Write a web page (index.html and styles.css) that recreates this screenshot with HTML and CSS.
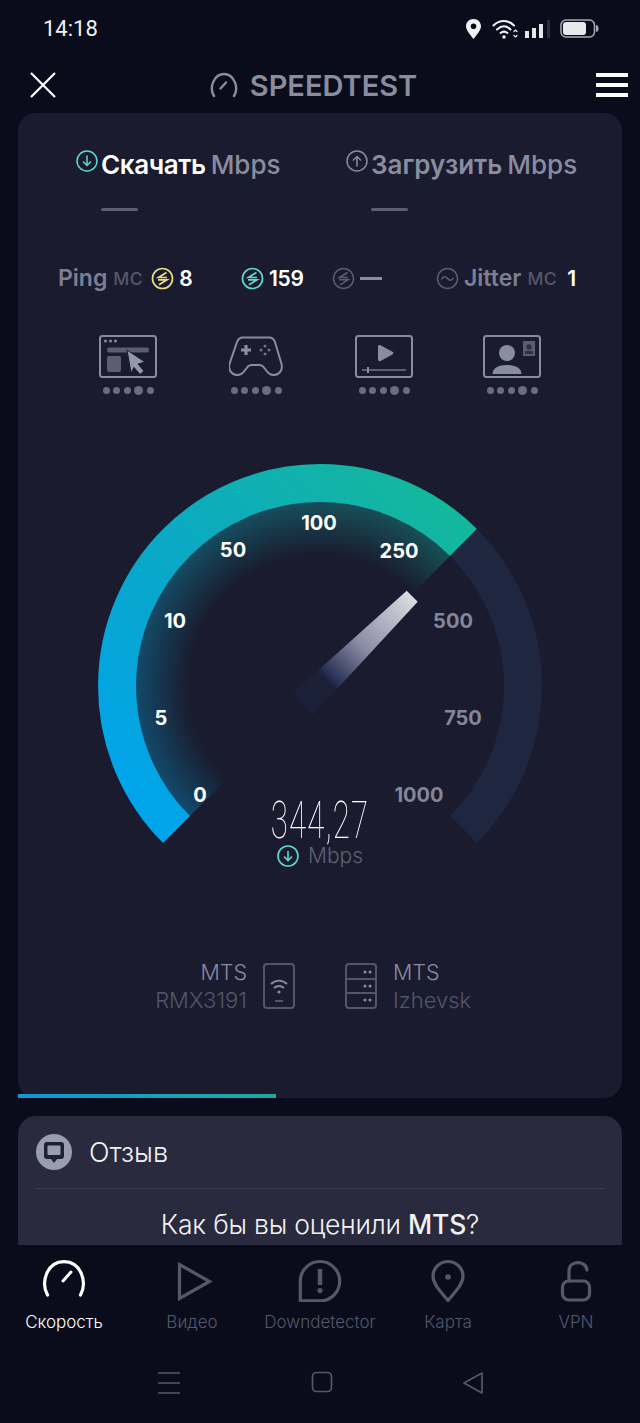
FILE: index.html
```html
<!DOCTYPE html>
<html lang="ru">
<head>
  <meta charset="UTF-8" />
  <meta name="viewport" content="width=device-width, initial-scale=1.0" />
  <title>Speedtest</title>
  <link rel="stylesheet" href="styles.css">
</head>
<body>
  <div class="screen">
    <!-- Status bar -->
    <div class="status-bar">
      <span class="clock">14:18</span>
      <div class="status-icons">
        <svg class="pin" width="17" height="20" viewBox="0 0 16 20"><path fill="#f2f2f4" fill-rule="evenodd" d="M8 0C3.600 0 .5 3.200 .5 7.200.5 11.500 5.500 16.500 8 20c2.500-3.500 7.500-8.500 7.500-12.800C15.500 3.200 12.400 0 8 0zm0 4.500a2.800 2.800 0 1 1 0 5.600 2.800 2.800 0 0 1 0-5.600z"/></svg>
        <svg class="wifi" width="26" height="20" viewBox="0 0 26 20" fill="none" stroke="#f2f2f4" stroke-width="2" stroke-linecap="round"><path d="M1.500 6.500c6-6 14.500-6 20.500 0"/><path d="M5 10.500c4.500-4 9.500-4 13.500 0"/><path d="M8.500 14c2.500-2 4.500-2 7 0"/><circle cx="12" cy="18" r="1.700" fill="#f2f2f4" stroke="none"/><path d="M22 12.500l1.500-1.500 1.500 1.500M22 16.500l1.500 1.500 1.500-1.500" stroke-width="1.200"/></svg>
        <svg class="bars" width="26" height="18" viewBox="0 0 26 18"><rect x="0" y="11" width="4" height="7" fill="#e6e6ea"/><rect x="7" y="8" width="4" height="10" fill="#e6e6ea"/><rect x="14" y="4" width="4" height="14" fill="#e6e6ea"/><rect x="22" y="0" width="3" height="18" fill="#2c2e3c"/></svg>
        <svg class="battery" width="39" height="19" viewBox="0 0 39 19"><rect x="1" y="1" width="33.500" height="17" rx="5" fill="none" stroke="#a9aab2" stroke-width="1.500"/><rect x="3" y="3" width="23" height="13" rx="3" fill="#e9e9ec"/><path d="M36 6c2 .3 2.500 1.500 2.500 3.500S38 12.700 36 13z" fill="#a9aab2"/></svg>
      </div>
    </div>

    <!-- Top bar -->
    <div class="top-bar">
      <svg width="26" height="26" viewBox="0 0 26 26" stroke="#fff" stroke-width="2.200"><path d="M1 1l24 24M25 1L1 25"/></svg>
      <div class="brand">
        <svg width="30" height="26" viewBox="0 0 30 26" fill="none" stroke="#8a8c9f" stroke-width="2.400" stroke-linecap="round"><path d="M5 24C-.5 15 5.500 2 15 2s15.500 13 10 22"/><path d="M11.500 16.500l5.500-6"/></svg>
        <span>SPEEDTEST</span>
      </div>
      <div class="burger"><i></i><i></i><i></i></div>
    </div>

    <!-- Main test card -->
    <div class="test-card">
      <div class="tabs">
        <div class="tab">
          <div class="tab-title">
            <svg class="tab-icon" width="22" height="22" viewBox="0 0 22 22" fill="none" stroke="#5fd8d0" stroke-width="1.500"><circle cx="11" cy="11" r="10"/><path d="M11 5.500v10M7 11.500l4 4 4-4"/></svg>
            <span class="tab-name active">Скачать</span><span class="tab-unit">Mbps</span>
          </div>
          <div class="tab-dash"></div>
        </div>
        <div class="tab">
          <div class="tab-title">
            <svg class="tab-icon" width="22" height="22" viewBox="0 0 22 22" fill="none" stroke="#8a8c9f" stroke-width="1.500"><circle cx="11" cy="11" r="10"/><path d="M11 16.500v-10M7 10.500l4-4 4 4"/></svg>
            <span class="tab-name">Загрузить</span><span class="tab-unit">Mbps</span>
          </div>
          <div class="tab-dash"></div>
        </div>
      </div>

      <div class="stats">
        <div class="stat">
          <span class="stat-label">Ping</span><span class="stat-unit">МС</span>
          <svg class="stat-icon" width="23" height="23" viewBox="0 0 23 23" fill="none" stroke="#eadc82" stroke-width="1.700"><circle cx="11.500" cy="11.500" r="10"/><path d="M15.500 5.500L7.500 10.500H16M7 12.800h9l-8 5"/></svg>
          <span class="stat-value">8</span>
        </div>
        <div class="stat">
          <svg class="stat-icon first" width="23" height="23" viewBox="0 0 23 23" fill="none" stroke="#5fd8d0" stroke-width="1.700"><circle cx="11.500" cy="11.500" r="10"/><path d="M15.500 5.500L7.500 10.500H16M7 12.800h9l-8 5"/></svg>
          <span class="stat-value">159</span>
        </div>
        <div class="stat">
          <svg class="stat-icon first" width="23" height="23" viewBox="0 0 23 23" fill="none" stroke="#5c5e70" stroke-width="1.500"><circle cx="11.500" cy="11.500" r="10"/><path d="M15.500 5.500L7.500 10.500H16M7 12.800h9l-8 5"/></svg>
          <span class="stat-none"></span>
        </div>
        <div class="stat">
          <svg class="stat-icon first" width="23" height="23" viewBox="0 0 23 23" fill="none" stroke="#5c5e70" stroke-width="1.500"><circle cx="11.500" cy="11.500" r="10"/><path d="M5.500 12.500c1.500-3.500 4-3.500 6 -1s4.500 2.500 6-1"/></svg>
          <span class="stat-label">Jitter</span><span class="stat-unit">МС</span><span class="stat-value jitter">1</span>
        </div>
      </div>

      <div class="services">
        <div class="service">
          <svg width="58" height="43" viewBox="0 0 58 43"><rect x="1" y="1" width="56" height="41" rx="2.500" fill="none" stroke="#8a8c9f" stroke-width="2"/><circle cx="6.500" cy="6" r="1.500" fill="#8a8c9f"/><circle cx="11.500" cy="6" r="1.500" fill="#8a8c9f"/><circle cx="16.500" cy="6" r="1.500" fill="#8a8c9f"/><rect x="8" y="12.500" width="42" height="5" rx="2.500" fill="#5c5e70"/><rect x="8" y="21" width="14" height="16" rx="2" fill="#5c5e70"/><path d="M28 15L46 27l-7 2 6 7-4 3.500-6-7-3 5.500z" fill="#9496a9" stroke="#1a1b2e" stroke-width="1"/></svg>
          <div class="dots"><i></i><i></i><i></i><b></b><i></i></div>
        </div>
        <div class="service">
          <svg width="54" height="38" viewBox="0 0 54 40" fill="none"><path d="M14 1h26c3 0 5 1.500 6 4.500l6.500 22c1.500 6-2 10.500-7.500 11-3 .3-5-1-7-3.500l-4-5c-1-1-2-1.500-3.500-1.500h-8c-1.500 0-2.500.5-3.500 1.500l-4 5c-2 2.500-4 3.800-7 3.500-5.500-.5-9-5-7.500-11L8 5.500C9 2.500 11 1 14 1z" stroke="#8a8c9f" stroke-width="2"/><path d="M12 13.500h10M17 8.500v10" stroke="#8a8c9f" stroke-width="3.200"/><g fill="#70728a"><circle cx="36" cy="9.500" r="1.500"/><circle cx="36" cy="17.500" r="1.500"/><circle cx="32" cy="13.500" r="1.500"/><circle cx="40" cy="13.500" r="1.500"/></g></svg>
          <div class="dots"><i></i><i></i><i></i><b></b><i></i></div>
        </div>
        <div class="service">
          <svg width="58" height="43" viewBox="0 0 58 43"><rect x="1" y="1" width="56" height="41" rx="2.500" fill="none" stroke="#8a8c9f" stroke-width="2"/><path d="M23 11.500c0-1.500 1.300-2 2.500-1.300l12 6.500c1.200.7 1.200 2 0 2.700l-12 6.500c-1.200.7-2.500.2-2.500-1.300z" fill="#8a8c9f"/><rect x="7" y="34" width="44" height="2" fill="#5c5e70"/><rect x="12" y="32" width="2" height="6" fill="#8a8c9f"/></svg>
          <div class="dots"><i></i><i></i><i></i><b></b><i></i></div>
        </div>
        <div class="service">
          <svg width="58" height="43" viewBox="0 0 58 43"><rect x="1" y="1" width="56" height="41" rx="2.500" fill="none" stroke="#8a8c9f" stroke-width="2"/><circle cx="24" cy="18" r="8" fill="#8a8c9f"/><path d="M9.500 39c0-6 6-9 14.500-9s14.500 3 14.500 9z" fill="#8a8c9f"/><rect x="40" y="6" width="12" height="15" fill="#5c5e70"/><circle cx="46" cy="12" r="2.700" fill="#2c2e42"/><rect x="42" y="16" width="8" height="3" fill="#2c2e42"/></svg>
          <div class="dots"><i></i><i></i><i></i><b></b><i></i></div>
        </div>
      </div>

      <div class="gauge">
        <svg class="gauge-svg" width="604" height="420" viewBox="0 0 604 420">
          <defs>
            <linearGradient id="ringGrad" gradientUnits="userSpaceOnUse" x1="145" y1="393" x2="461" y2="81">
              <stop offset="0" stop-color="#00a4ec"/>
              <stop offset="0.35" stop-color="#07a6cf"/>
              <stop offset="0.7" stop-color="#0fafb4"/>
              <stop offset="1" stop-color="#14b89b"/>
            </linearGradient>
            <radialGradient id="glowFade" gradientUnits="userSpaceOnUse" cx="302" cy="236" r="186">
              <stop offset="0.7" stop-color="#000"/>
              <stop offset="1" stop-color="#5c5c5c"/>
            </radialGradient>
            <mask id="glowMask" maskUnits="userSpaceOnUse" x="0" y="0" width="604" height="420"><rect width="604" height="420" fill="url(#glowFade)"/></mask>
            <linearGradient id="needleGrad" gradientUnits="userSpaceOnUse" x1="394" y1="146" x2="285" y2="254">
              <stop offset="0" stop-color="#dcdce0"/>
              <stop offset="0.45" stop-color="#8d8ea6"/>
              <stop offset="0.75" stop-color="#262d52"/>
              <stop offset="0.78" stop-color="#1c213a"/>
              <stop offset="1" stop-color="#1b2038"/>
            </linearGradient>
          </defs>
          <path d="M170 368A180 180 0 0 1 434 104L302 236z" fill="url(#ringGrad)" mask="url(#glowMask)"/>
          <path d="M158.460 379.540A200 200 0 0 1 445.540 92.460" fill="none" stroke="url(#ringGrad)" stroke-width="38"/>
          <path d="M445.540 92.460A203 203 0 0 1 445.540 379.540" fill="none" stroke="#1e2640" stroke-width="38"/>
          <path d="M388.700 140.700L399.700 151.700 295 265 275 243z" fill="url(#needleGrad)"/>
          <g class="ticks">
            <text x="182" y="352">0</text>
            <text x="143" y="275">5</text>
            <text x="157" y="178">10</text>
            <text x="215" y="107">50</text>
            <text x="301" y="80">100</text>
            <text x="381" y="108">250</text>
            <text class="off" x="435" y="178">500</text>
            <text class="off" x="445" y="275">750</text>
            <text class="off" x="401" y="352">1000</text>
          </g>
        </svg>
        <div class="readout">
          <div class="readout-value">344,27</div>
          <div class="readout-unit">
            <svg width="22" height="22" viewBox="0 0 22 22" fill="none" stroke="#5fd8d0" stroke-width="1.600"><circle cx="11" cy="11" r="10"/><path d="M11 6v9.500M7 11.500l4 4 4-4"/></svg>
            <span>Mbps</span>
          </div>
        </div>
      </div>

      <div class="hosts">
        <div class="host host-left">
          <div class="host-text"><div class="host-name">MTS</div><div class="host-sub">RMX3191</div></div>
          <svg width="32" height="46" viewBox="0 0 32 46" fill="none" stroke="#53566a" stroke-width="2"><rect x="1" y="1" width="30" height="44" rx="3"/><path d="M8 21c5-4.500 11-4.500 16 0M11 25c3-2.500 7-2.500 10 0" stroke="#8a8c9f"/><circle cx="16" cy="29" r="1.600" fill="#8a8c9f" stroke="none"/><path d="M12 38h8"/></svg>
        </div>
        <div class="host">
          <svg width="32" height="46" viewBox="0 0 32 46" fill="none" stroke="#53566a" stroke-width="2"><rect x="1" y="1" width="30" height="44" rx="3"/><path d="M1 16h30M1 30h30"/><g fill="#8a8c9f" stroke="none"><circle cx="20" cy="9" r="1.500"/><circle cx="25" cy="9" r="1.500"/><circle cx="20" cy="23" r="1.500"/><circle cx="25" cy="23" r="1.500"/><circle cx="20" cy="37" r="1.500"/><circle cx="25" cy="37" r="1.500"/></g></svg>
          <div class="host-text"><div class="host-name">MTS</div><div class="host-sub">Izhevsk</div></div>
        </div>
      </div>

      <div class="progress"><div class="progress-fill" style="width:258px"></div></div>
    </div>

    <!-- Feedback card, cut off by the nav -->
    <div class="feedback">
      <div class="feedback-head">
        <div class="feedback-badge">
          <svg width="22" height="24" viewBox="0 0 22 24"><path d="M4 2h14a3 3 0 0 1 3 3v11a3 3 0 0 1-3 3h-4l-3 4-3-4H4a3 3 0 0 1-3-3V5a3 3 0 0 1 3-3z" fill="#1f2033"/><rect x="4.500" y="5.500" width="13" height="9.500" rx="1" fill="#9a9cb0"/></svg>
        </div>
        <span>Отзыв</span>
      </div>
      <div class="feedback-question">Как бы вы оценили <strong>MTS</strong>?</div>
    </div>

    <!-- Bottom nav -->
    <div class="bottom-nav">
      <div class="nav-item active">
        <svg width="44" height="44" viewBox="0 0 44 44" fill="none" stroke="#fff" stroke-width="3.200" stroke-linecap="round"><path d="M5.500 37C-1.500 24 5 3.600 22 3.600s23.500 20.400 16.500 33.400"/><path d="M21 23l8-9" stroke-width="3"/></svg>
        <span>Скорость</span>
      </div>
      <div class="nav-item">
        <svg width="44" height="44" viewBox="0 0 44 44" fill="none" stroke="#55586a" stroke-width="3.200"><path d="M9.500 6.500v34L39.500 23.500z"/></svg>
        <span>Видео</span>
      </div>
      <div class="nav-item">
        <svg width="44" height="44" viewBox="0 0 44 44" fill="none" stroke="#55586a" stroke-width="3.200"><path d="M22 3.500a19.700 19.700 0 0 1 0 39.400H2.300V23.200A19.700 19.700 0 0 1 22 3.500z"/><path d="M22 11v16" stroke-width="4.500"/><circle cx="22" cy="32.500" r="2.600" fill="#55586a" stroke="none"/></svg>
        <span>Downdetector</span>
      </div>
      <div class="nav-item">
        <svg width="44" height="44" viewBox="0 0 44 44" fill="none" stroke="#55586a" stroke-width="3.200"><path d="M22 42.500C14 33 7 26 7 18 7 10 14 3.500 22 3.500S37 10 37 18C37 26 30 33 22 42.500z"/><circle cx="22" cy="19" r="2.800" fill="#55586a" stroke="none"/></svg>
        <span>Карта</span>
      </div>
      <div class="nav-item">
        <svg width="44" height="44" viewBox="0 0 44 44" fill="none" stroke="#55586a" stroke-width="3.200"><rect x="8.500" y="23" width="27" height="19" rx="6"/><path d="M15 23v-10c0-11 17-11 18-1" stroke-linecap="round"/></svg>
        <span>VPN</span>
      </div>
    </div>

    <!-- Android buttons -->
    <div class="system-nav">
      <svg width="24" height="24" viewBox="0 0 24 24" stroke="#55586a" stroke-width="1.700"><path d="M1 2h22M1 12h22M1 22h22"/></svg>
      <svg width="22" height="22" viewBox="0 0 22 22" fill="none" stroke="#55586a" stroke-width="1.700"><rect x="1.500" y="1.500" width="19" height="19" rx="4"/></svg>
      <svg width="22" height="24" viewBox="0 0 22 24" fill="none" stroke="#55586a" stroke-width="1.700" stroke-linejoin="round"><path d="M20 2v20L2 12z"/></svg>
    </div>
  </div>
</body>
</html>
```

FILE: styles.css
```css
* { box-sizing: border-box; margin: 0; padding: 0; }
html, body { height: 100%; }
body { font-family: Inter, "Noto Sans", sans-serif; background: #0a0c1b; color: #fff; }
.screen { width: 640px; height: 1423px; display: flex; flex-direction: column; overflow: hidden; position: relative; }

.status-bar { height: 57px; flex: none; display: flex; justify-content: space-between; align-items: center; padding: 0 41px 0 43px; }
.clock { font-family: Roboto, sans-serif; font-size: 22px; color: #f2f2f4; }
.status-icons { display: flex; align-items: center; }
.wifi { margin-left: 10px; }
.bars { margin-left: 7px; }
.battery { margin-left: 9px; }

.top-bar { height: 56px; flex: none; display: flex; align-items: center; justify-content: space-between; padding: 0 12px 0 30px; }
.brand { display: flex; align-items: center; gap: 11px; font-size: 29px; font-weight: 600; color: #8a8c9f; margin-right: 26px; }
.burger { width: 32px; display: flex; flex-direction: column; gap: 6px; }
.burger i { display: block; height: 4px; background: #fff; }

.test-card { height: 985px; flex: none; margin: 0 18px; background: #1a1b2e; border-radius: 18px; position: relative; padding-top: 36px; }
.tabs { display: grid; grid-template-columns: 270px 270px; padding-left: 58px; }
.tab-title { display: flex; align-items: center; height: 30px; }
.tab-icon { flex: none; margin: -7px 3px 0 0; }
.tab-name { font-size: 26px; font-weight: 600; color: #8a8c9f; white-space: nowrap; }
.tab-name.active { color: #fff; letter-spacing: -0.4px; }
.tab-unit { font-size: 26px; font-weight: 500; color: #8a8c9f; margin-left: 5px; }
.tab-dash { width: 37px; height: 3px; border-radius: 2px; background: #5c5e70; margin: 29px 0 0 25px; }

.stats { display: grid; grid-template-columns: 183px 91px 104px auto; padding-left: 40px; margin-top: 53px; height: 24px; align-items: center; }
.stat { display: flex; align-items: center; }
.stat-label { font-size: 23px; font-weight: 600; color: #7d7f92; }
.stat-unit { font-size: 17.500px; font-weight: 500; color: #55586a; margin-left: 6px; letter-spacing: 0.5px; }
.stat-icon { flex: none; margin: 0 5px 0 8px; }
.stat-icon.first { margin-left: 0; }
.stat-value { font-size: 21px; font-weight: 600; color: #fff; letter-spacing: -0.3px; }
.stat-value.jitter { margin-left: 10px; }
.stat-none { width: 22px; height: 3px; background: #8a8c9f; }

.services { display: grid; grid-template-columns: repeat(4, 128px); padding-left: 46px; margin-top: 47px; }
.service { display: flex; flex-direction: column; align-items: center; height: 63px; }
.service svg { flex: none; height: 43px; }
.dots { display: flex; align-items: center; gap: 3.500px; margin-top: 8px; }
.dots i { width: 7px; height: 7px; border-radius: 50%; background: #6a6c80; }
.dots b { width: 9px; height: 9px; border-radius: 50%; background: #6a6c80; }

.gauge { position: relative; height: 420px; margin-top: 52px; }
.gauge-svg { display: block; }
.ticks text { font-size: 20px; font-weight: 700; fill: #fff; text-anchor: middle; }
.ticks text.off { fill: #85869a; }
.readout { position: absolute; left: 0; right: 0; top: 348px; display: flex; flex-direction: column; align-items: center; }
.readout-value { font-family: Roboto, sans-serif; font-weight: 100; font-size: 52px; line-height: 46px; letter-spacing: 2px; transform: scaleX(0.6); color: #fff; }
.readout-unit { display: flex; align-items: center; gap: 9px; font-size: 21px; font-weight: 300; color: #5f6175; margin-top: -1px; }

.hosts { display: flex; justify-content: center; margin-top: 88px; }
.host { display: flex; align-items: center; gap: 16px; width: 177px; }
.host-left { justify-content: flex-end; margin-right: 50px; }
.host-name { font-size: 21.500px; font-weight: 300; color: #8a8c9f; line-height: 28px; }
.host-sub { font-size: 22px; font-weight: 300; color: #53566a; line-height: 28px; }
.host-left .host-text { text-align: right; }

.progress { position: absolute; left: 0; right: 0; bottom: 0; height: 4px; }
.progress-fill { height: 100%; background: linear-gradient(90deg, #1495d6, #1fa89f); }

.feedback { flex: none; height: 129px; margin: 18px 18px 0; background: #292a3d; border-radius: 18px 18px 0 0; padding: 0 18px; overflow: hidden; }
.feedback-head { height: 73px; display: flex; align-items: center; gap: 17px; font-size: 27px; font-weight: 300; border-bottom: 1px solid #3c3d50; color: #f2f2f4; }
.feedback-badge { width: 36px; height: 36px; border-radius: 50%; background: #9a9cb0; display: flex; align-items: center; justify-content: center; }
.feedback-question { font-size: 26.500px; font-weight: 300; text-align: center; margin-top: 19px; color: #f2f2f4; letter-spacing: -0.2px; }
.feedback-question strong { font-weight: 500; }

.bottom-nav { height: 105px; flex: none; display: grid; grid-template-columns: repeat(5, 128px); padding: 13px 0 0 0; }
.nav-item { display: flex; flex-direction: column; align-items: center; gap: 10px; font-size: 17px; font-weight: 300; color: #55586a; }
.nav-item.active { color: #fff; }

.system-nav { flex: 1; display: flex; align-items: flex-start; justify-content: space-between; padding: 21px 156px 0 157px; }
```
